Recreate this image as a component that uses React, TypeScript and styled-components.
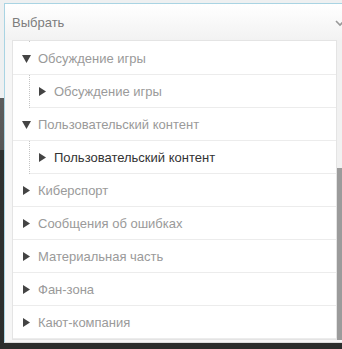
import * as React from "react";
import styled, { createGlobalStyle } from "styled-components";

const GlobalStyle = createGlobalStyle`
  html, body {
    margin: 0;
    padding: 0;
  }
  body {
    width: 342px;
    height: 349px;
    overflow: hidden;
    font-family: "Liberation Sans", Arial, sans-serif;
    background: linear-gradient(
      to bottom,
      #eef0f1 0px,
      #eef0f1 98px,
      #5c5c5c 98px,
      #555 150px,
      #2f3130 150px,
      #2b2d2c 349px
    );
  }
`;

const Page = styled.div`
  width: 342px;
  height: 349px;
  padding: 3px 0 0 4px;
  box-sizing: border-box;
  overflow: hidden;
`;

const Dropdown = styled.div`
  width: 345px;
  height: 340px;
  box-sizing: border-box;
  border: 1px solid #a9d4e3;
  border-bottom-color: #dcdcdc;
  background: #f6f6f6;
  display: flex;
  flex-direction: column;
`;

const Header = styled.div`
  height: 36px;
  flex: 0 0 auto;
  display: flex;
  align-items: center;
  justify-content: space-between;
  padding: 0 3px 0 7px;
  background: linear-gradient(to bottom, #ffffff, #f2f2f2);
  color: #7d7d7d;
  font-size: 13px;
`;

const Chevron = styled.svg`
  width: 10px;
  height: 7px;
  margin-top: 2px;
`;

const Body = styled.div`
  flex: 1 1 auto;
  display: flex;
  padding: 0 0 2px 7px;
  min-height: 0;
`;

const List = styled.div`
  flex: 0 0 325px;
  background: #fff;
  border: 1px solid #e4e4e4;
  box-sizing: border-box;
  overflow: hidden;
`;

const ScrollTrack = styled.div`
  flex: 0 0 5px;
  background: #f1f1f1;
  display: flex;
  flex-direction: column;
  justify-content: flex-end;
`;

const ScrollThumb = styled.div`
  height: 172px;
  background: #9b9b9b;
`;

const Children = styled.div<{ $stub?: boolean }>`
  margin-left: 16px;
  border-left: 1px dotted #c4c4c4;
  height: ${(p) => (p.$stub ? "1px" : "auto")};
`;

const Row = styled.div<{ $child?: boolean }>`
  height: 33px;
  box-sizing: border-box;
  display: flex;
  align-items: center;
  gap: 7px;
  padding-left: ${(p) => (p.$child ? "8px" : "9px")};
  border-bottom: 1px solid #ececec;
  font-size: 13px;
`;

const Label = styled.span<{ $active?: boolean }>`
  color: ${(p) => (p.$active ? "#333" : "#9a9a9a")};
  white-space: nowrap;
`;

const Arrow = styled.svg`
  flex: 0 0 auto;
  fill: #444;
`;

const Caret = ({ open }: { open?: boolean }) =>
  open ? (
    <Arrow width="9" height="8" viewBox="0 0 9 8" style={{ marginTop: 1 }}>
      <polygon points="0,0 9,0 4.5,8" />
    </Arrow>
  ) : (
    <Arrow width="7" height="9" viewBox="0 0 7 9" style={{ marginLeft: 1, marginRight: 1 }}>
      <polygon points="0,0 7,4.5 0,9" />
    </Arrow>
  );

type Node = { label: string; open?: boolean; active?: boolean; children?: Node[] };

const tree: Node[] = [
  {
    label: "Обсуждение игры",
    open: true,
    children: [{ label: "Обсуждение игры" }],
  },
  {
    label: "Пользовательский контент",
    open: true,
    children: [{ label: "Пользовательский контент", active: true }],
  },
  { label: "Киберспорт" },
  { label: "Сообщения об ошибках" },
  { label: "Материальная часть" },
  { label: "Фан-зона" },
  { label: "Кают-компания" },
];

export default function App() {
  return (
    <>
      <GlobalStyle />
      <Page>
        <Dropdown>
          <Header>
            <span>Выбрать</span>
            <Chevron viewBox="0 0 10 7">
              <polyline points="1,1 5,5 9,1" fill="none" stroke="#999" strokeWidth="1.6" />
            </Chevron>
          </Header>
          <Body>
            <List>
              <Children $stub />
              {tree.map((node) => (
                <React.Fragment key={node.label}>
                  <Row>
                    <Caret open={node.open} />
                    <Label>{node.label}</Label>
                  </Row>
                  {node.children && (
                    <Children>
                      {node.children.map((c) => (
                        <Row $child key={c.label}>
                          <Caret />
                          <Label $active={c.active}>{c.label}</Label>
                        </Row>
                      ))}
                    </Children>
                  )}
                </React.Fragment>
              ))}
            </List>
            <ScrollTrack>
              <ScrollThumb />
            </ScrollTrack>
          </Body>
        </Dropdown>
      </Page>
    </>
  );
}
